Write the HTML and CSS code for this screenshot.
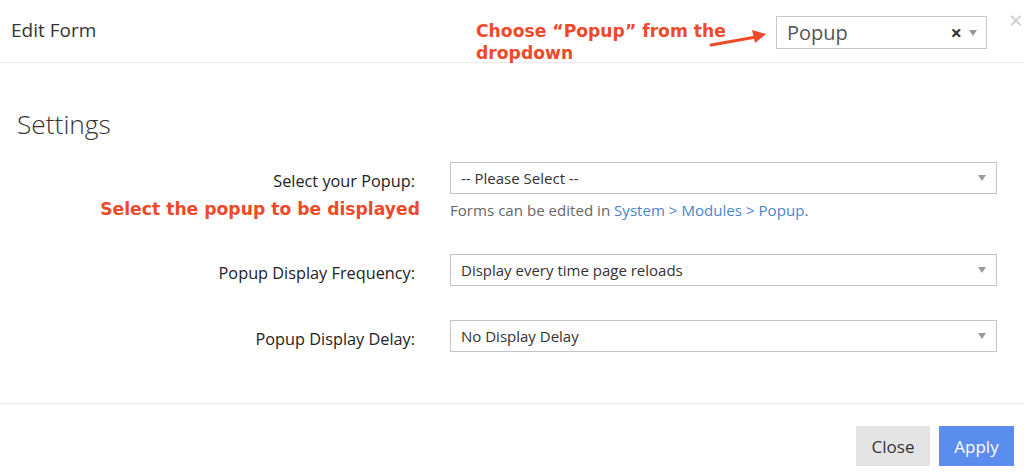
FILE: index.html
```html
<!DOCTYPE html>
<html>
<head>
<meta charset="utf-8">
<link rel="stylesheet" href="styles.css">
</head>
<body>
<div class="modal">
  <header class="head">
    <h1 class="title">Edit Form</h1>
    <div class="head-right">
      <div class="note note-top">Choose “Popup” from the dropdown</div>
      <svg class="arrow" width="60" height="20" viewBox="0 0 60 20">
        <line x1="3" y1="16" x2="48" y2="8" stroke="#ee4a2a" stroke-width="3" stroke-linecap="round"/>
        <polygon points="58,5 44,1 47,14" fill="#ee4a2a"/>
      </svg>
      <div class="type-select">
        <span class="type-value">Popup</span>
        <span class="clear">×</span>
        <span class="caret"></span>
      </div>
      <span class="close-x">×</span>
    </div>
  </header>
  <main class="body">
    <h2 class="section">Settings</h2>
    <div class="form">
      <div class="row">
        <div class="label-col">
          <label class="label">Select your Popup:</label>
          <div class="note note-side">Select the popup to be displayed</div>
        </div>
        <div class="field">
          <div class="select"><span>-- Please Select --</span><span class="caret"></span></div>
          <p class="help">Forms can be edited in <a class="link">System &gt; Modules &gt; Popup</a>.</p>
        </div>
      </div>
      <div class="row">
        <div class="label-col"><label class="label">Popup Display Frequency:</label></div>
        <div class="field">
          <div class="select"><span>Display every time page reloads</span><span class="caret"></span></div>
        </div>
      </div>
      <div class="row">
        <div class="label-col"><label class="label">Popup Display Delay:</label></div>
        <div class="field">
          <div class="select"><span>No Display Delay</span><span class="caret"></span></div>
        </div>
      </div>
    </div>
  </main>
  <footer class="foot">
    <button class="btn btn-close">Close</button>
    <button class="btn btn-apply">Apply</button>
  </footer>
</div>
</body>
</html>
```

FILE: styles.css
```css
* { box-sizing: border-box; }
html, body { margin: 0; padding: 0; background: #fff; }
body {
  font-family: "Open Sans", "Liberation Sans", sans-serif;
  color: #333;
  width: 1024px;
  height: 476px;
  overflow: hidden;
}
.head {
  height: 63px;
  border-bottom: 1px solid #ebebeb;
  display: flex;
  align-items: flex-start;
  padding-left: 11px;
}
.title {
  margin: 16px 0 0;
  font-size: 19px;
  font-weight: 400;
  color: #333;
  line-height: 28px;
}
.head-right {
  margin-left: auto;
  display: flex;
  align-items: flex-start;
}
.note {
  font-family: "DejaVu Sans", Verdana, sans-serif;
  font-weight: bold;
  color: #ee4a2a;
}
.note-top {
  width: 262px;
  font-size: 17.2px;
  line-height: 22px;
  margin-top: 20px;
  margin-left: -1px;
}
.arrow {
  margin-top: 29px;
  margin-left: -30px;
  display: block;
}
.type-select {
  margin-left: 8px;
  margin-top: 16px;
  width: 211px;
  height: 33px;
  border: 1px solid #c8c8c8;
  display: flex;
  align-items: center;
  padding: 0 9px 0 10px;
}
.type-value { font-size: 20px; color: #555; flex: 1; line-height: 1; }
.clear { font-size: 20px; font-weight: bold; color: #333; margin-right: 7px; line-height: 1; }
.caret {
  width: 0; height: 0;
  border-left: 4.5px solid transparent;
  border-right: 4.5px solid transparent;
  border-top: 6px solid #999;
}
.close-x {
  margin: 8px 0 0 22px;
  width: 15px;
  font-size: 24px;
  line-height: 24px;
  color: #ccc;
}
.body {
  height: 341px;
  border-bottom: 1px solid #e6e6e6;
  padding: 42px 27px 0 17px;
}
.section {
  margin: 0 0 19px;
  font-size: 26.3px;
  font-weight: 300;
  line-height: 38px;
  color: #333;
}
.form { display: flex; flex-direction: column; gap: 34px; }
.row {
  display: grid;
  grid-template-columns: 398px 1fr;
  column-gap: 35px;
}
.label-col { display: flex; flex-direction: column; align-items: flex-end; }
.label {
  font-size: 16.3px;
  line-height: 20px;
  padding-top: 9px;
  color: #222;
}
.note-side {
  font-size: 17.2px;
  line-height: 20px;
  margin-top: 8px;
  margin-right: -5px;
}
.select {
  height: 32px;
  border: 1px solid #c4c4c4;
  display: flex;
  align-items: center;
  justify-content: space-between;
  padding: 0 10px 0 10px;
  font-size: 15px;
  color: #333;
}
.help {
  margin: 6px 0 0;
  font-size: 15.1px;
  line-height: 20px;
  color: #666;
}
.link { color: #4a85cc; }
.foot {
  display: flex;
  justify-content: flex-end;
  gap: 9px;
  padding: 22px 10px 0 0;
}
.btn {
  height: 40px;
  border: none;
  font-family: "Open Sans", "Liberation Sans", sans-serif;
  font-size: 17px;
  padding: 0;
}
.btn-close { width: 74px; background: #e4e4e4; color: #333; }
.btn-apply { width: 75px; background: #5b8def; color: #fff; }
```
